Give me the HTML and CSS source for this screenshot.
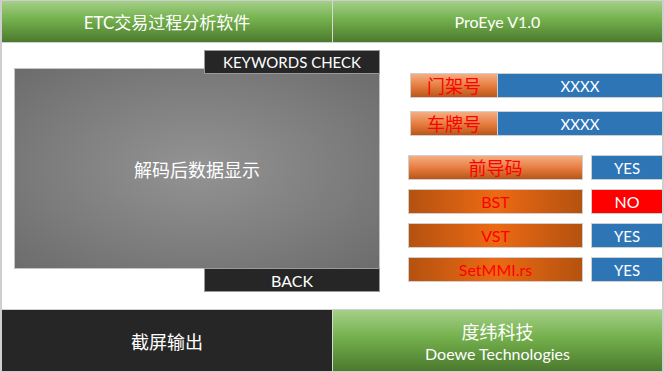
FILE: index.html
```html
<!DOCTYPE html>
<html lang="zh-CN">
<head>
  <meta charset="UTF-8" />
  <title>ETC交易过程分析软件</title>
  <link rel="stylesheet" href="styles.css">
</head>
<body>
  <div class="app">

    <!-- Title bar -->
    <div class="top-bar">
      <div class="cell green title">ETC交易过程分析软件</div>
      <div class="cell green version">ProEye V1.0</div>
    </div>

    <!-- Main area -->
    <div class="main">
      <div class="left-side">
        <button class="dark-button kw-button">KEYWORDS CHECK</button>
        <div class="data-panel">解码后数据显示</div>
        <button class="dark-button back-button">BACK</button>
      </div>

      <div class="right-side">
        <div class="info-row first">
          <div class="label soft">门架号</div>
          <div class="value wide">XXXX</div>
        </div>
        <div class="info-row second">
          <div class="label soft">车牌号</div>
          <div class="value wide">XXXX</div>
        </div>

        <div class="check-row top">
          <div class="tag soft cn">前导码</div>
          <div class="state yes">YES</div>
        </div>
        <div class="check-row">
          <div class="tag hot">BST</div>
          <div class="state no">NO</div>
        </div>
        <div class="check-row">
          <div class="tag hot">VST</div>
          <div class="state yes">YES</div>
        </div>
        <div class="check-row">
          <div class="tag hot">SetMMI.rs</div>
          <div class="state yes">YES</div>
        </div>
      </div>
    </div>

    <!-- Bottom bar -->
    <div class="bottom-bar">
      <div class="cell dark big">截屏输出</div>
      <div class="cell green company">
        <span class="big">度纬科技</span>
        <span class="en">Doewe Technologies</span>
      </div>
    </div>

  </div>
</body>
</html>
```

FILE: styles.css
```css
body {
  margin: 0;
  font-family: Lato, "Noto Sans CJK SC", sans-serif;
  background: #ffffff;
}

.app {
  width: 664px;
  height: 372px;
  box-sizing: border-box;
  border: 1px solid #cfcfcf;
  border-left-width: 2px;
  border-right-width: 2px;
  display: flex;
  flex-direction: column;
  overflow: hidden;
}

.top-bar, .bottom-bar {
  display: grid;
  grid-template-columns: 330px 1fr;
  column-gap: 1px;
  background: #d8d8d8;
}

.top-bar {
  height: 41px;
  border-bottom: 1px solid #d0d0d0;
}

.bottom-bar {
  height: 61px;
  border-top: 1px solid #d0d0d0;
}

.cell {
  display: flex;
  align-items: center;
  justify-content: center;
  color: #ffffff;
  font-size: 14px;
}

.cell.title {
  font-size: 17px;
}

.cell.version {
  font-size: 16px;
}

.green {
  background: linear-gradient(to bottom, #a4d088, #74b04c 45%, #4b7a2e);
}

.dark {
  background: #262626;
}

.big {
  font-size: 18px;
}

.company {
  flex-direction: column;
  gap: 0;
  padding-top: 1px;
}

.company .en {
  font-size: 16px;
  line-height: 20px;
}

.main {
  flex: 1;
  display: flex;
}

.left-side {
  width: 366px;
  margin: 7px 0 0 12px;
  display: flex;
  flex-direction: column;
}

.dark-button {
  align-self: flex-end;
  width: 176px;
  height: 24px;
  background: #262626;
  border: 1px solid #9a9a9a;
  color: #ffffff;
  font-family: Lato, "Noto Sans CJK SC", sans-serif;
  font-size: 15px;
  padding: 0;
  position: relative;
  z-index: 1;
}

.kw-button {
  margin-bottom: -6px;
}

.back-button {
  margin-top: -1px;
  font-size: 16px;
}

.data-panel {
  height: 199px;
  border: 1px solid #c4c4c4;
  background: radial-gradient(ellipse at center, #939393 0%, #7c7c7c 60%, #6c6c6c 100%);
  color: #ffffff;
  font-size: 18px;
  display: flex;
  align-items: center;
  justify-content: center;
}

.right-side {
  flex: 1;
  margin-left: 28px;
  padding-top: 30px;
  display: flex;
  flex-direction: column;
}

.info-row {
  display: flex;
  height: 25px;
  margin-left: 2px;
}

.info-row.second {
  margin-top: 13px;
}

.label, .tag {
  box-sizing: border-box;
  border: 1px solid #cfcfcf;
  color: #ff0000;
  font-size: 16px;
  display: flex;
  align-items: center;
  justify-content: center;
}

.label {
  width: 88px;
  font-size: 18px;
  padding-bottom: 2px;
}

.tag.cn {
  font-size: 18px;
  padding-bottom: 2px;
}

.soft {
  background: linear-gradient(to bottom, #f5ae82, #e47a3c 55%, #b9561a);
}

.hot {
  background: linear-gradient(to right, #b4520f, #ec6a14 50%, #b4520f);
}

.value, .state {
  box-sizing: border-box;
  border: 1px solid #cfcfcf;
  color: #ffffff;
  font-size: 15px;
  display: flex;
  align-items: center;
  justify-content: center;
}

.value.wide {
  flex: 1;
  background: #2e75b6;
  border-left: none;
  border-right: none;
}

.check-row {
  display: flex;
  height: 25px;
  margin-top: 9px;
  gap: 8px;
}

.check-row.top {
  margin-top: 19px;
}

.tag {
  width: 175px;
}

.state {
  flex: 1;
  border-right: none;
}

.yes {
  background: #2e75b6;
}

.no {
  background: #ff0000;
  font-size: 16px;
}
```
